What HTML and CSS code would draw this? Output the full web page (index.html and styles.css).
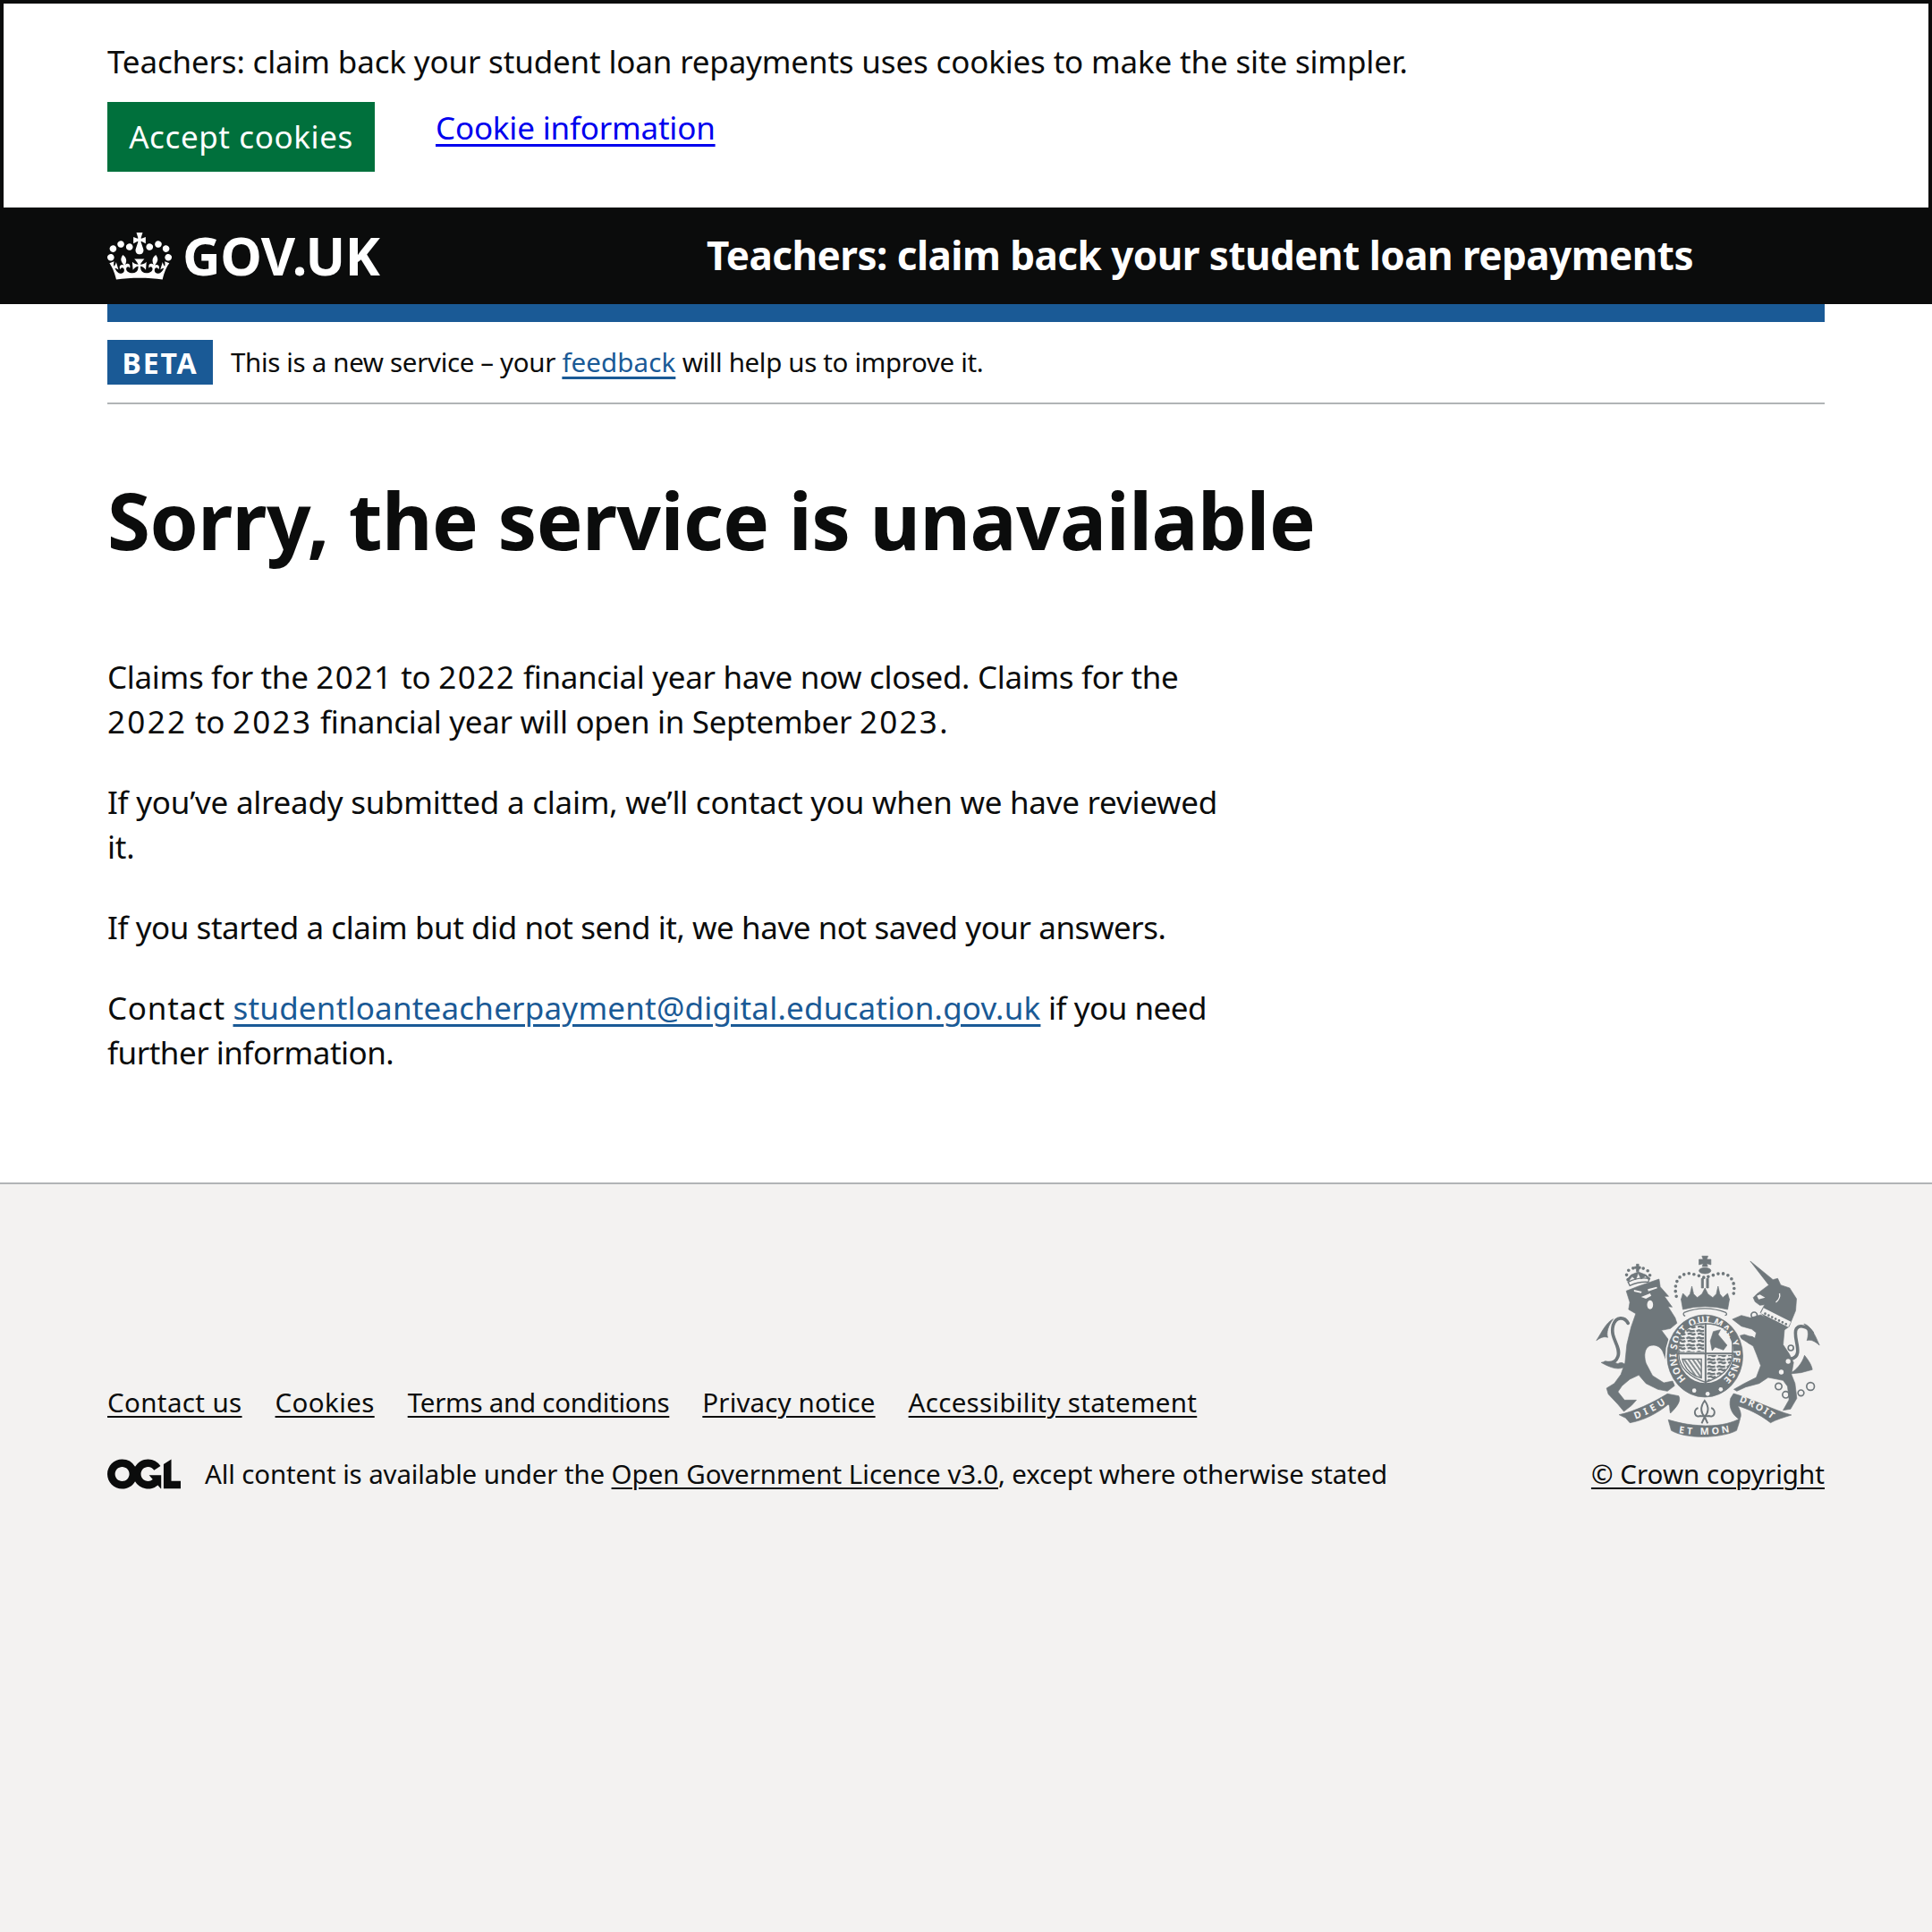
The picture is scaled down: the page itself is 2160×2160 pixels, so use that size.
FILE: index.html
```html
<!DOCTYPE html>
<html lang="en">
<head>
<meta charset="utf-8">
<title>Sorry, the service is unavailable</title>
<link rel="stylesheet" href="styles.css">
</head>
<body>
<section class="cookie">
  <p class="cookie-text">Teachers: claim back your student loan repayments uses cookies to make the site simpler.</p>
  <div class="cookie-actions">
    <button class="accept" type="button">Accept cookies</button>
    <a class="cookie-link" href="#">Cookie information</a>
  </div>
</section>

<header class="header">
  <a class="logo" href="#">
    <svg class="crown" viewBox="0 0 132 97" aria-hidden="true"><path fill="currentColor" fill-rule="evenodd" d="M25 30.2c3.5 1.5 7.7-.2 9.1-3.7 1.5-3.6-.2-7.8-3.9-9.2-3.6-1.4-7.6.3-9.1 3.9-1.4 3.5.3 7.5 3.9 9zM9 39.5c3.6 1.5 7.8-.2 9.2-3.7 1.5-3.6-.2-7.8-3.9-9.1-3.6-1.5-7.6.2-9.1 3.8-1.4 3.5.3 7.5 3.8 9zM4.4 57.2c3.5 1.5 7.7-.2 9.1-3.8 1.5-3.6-.2-7.7-3.9-9.1-3.5-1.5-7.6.3-9.1 3.8-1.4 3.5.3 7.6 3.9 9.1zm38.3-21.4c3.5 1.5 7.7-.2 9.1-3.8 1.5-3.6-.2-7.7-3.9-9.1-3.6-1.5-7.6.3-9.1 3.8-1.3 3.6.4 7.7 3.9 9.1zm64.4-5.6c-3.6 1.5-7.8-.2-9.1-3.7-1.5-3.6.2-7.8 3.8-9.2 3.6-1.4 7.7.3 9.2 3.9 1.3 3.5-.4 7.5-3.9 9zm15.9 9.3c-3.6 1.5-7.7-.2-9.1-3.7-1.5-3.6.2-7.8 3.7-9.1 3.6-1.5 7.7.2 9.2 3.8 1.5 3.5-.3 7.5-3.8 9zm4.7 17.7c-3.6 1.5-7.8-.2-9.2-3.8-1.5-3.6.2-7.7 3.9-9.1 3.6-1.5 7.7.3 9.2 3.8 1.3 3.5-.4 7.6-3.9 9.1zM89.3 35.8c-3.6 1.5-7.8-.2-9.2-3.8-1.4-3.6.2-7.7 3.9-9.1 3.6-1.5 7.7.3 9.2 3.8 1.4 3.6-.3 7.7-3.9 9.1zM69.7 17.7l8.9 4.7V9.3l-8.9 2.8c-.2-.3-.5-.6-.9-.9L72.4 0H59.6l3.5 11.2c-.3.3-.6.5-.9.9l-8.8-2.8v13.1l8.8-4.7c.3.3.6.7.9.9l-5 15.4v.1c-.2.8-.4 1.6-.4 2.4 0 4.1 3.1 7.5 7 8.1h.2c.3 0 .7.1 1 .1.4 0 .7 0 1-.1h.2c4-.6 7.1-4.1 7.1-8.1 0-.8-.1-1.7-.4-2.4V34l-5.1-15.4c.4-.2.7-.6 1-.9zM66 92.8c16.9 0 32.8 1.1 47.1 3.2 4-16.9 8.9-26.7 14-33.5l-9.6-3.4c1 4.9 1.1 7.2 0 10.2-1.5-1.4-3-4.3-4.2-8.7L108.6 76c2.8-2 5-3.2 7.5-3.3-4.4 9.4-10 11.9-13.6 11.2-4.3-.8-6.3-4.6-5.6-7.9 1-4.7 5.7-5.9 8-.5 4.3-8.7-3-11.4-7.6-8.8 7.1-7.2 7.9-13.5 2.1-21.1-8 6.1-8.1 12.3-4.5 20.8-4.7-5.4-12.1-2.5-9.5 6.2 3.4-5.2 7.9-2 7.2 3.1-.6 4.3-6.4 7.8-13.5 7.2-10.3-.9-10.9-8-11.2-13.8 2.5-.5 7.1 1.8 11 7.3L80.2 60c-4.1 4.4-8 5.3-12.3 5.4 1.4-4.4 8-11.6 8-11.6H55.5s6.4 7.2 7.9 11.6c-4.2-.1-8-1-12.3-5.4l1.4 16.4c3.9-5.5 8.5-7.7 10.9-7.3-.3 5.8-.9 12.8-11.1 13.8-7.2.6-12.9-2.9-13.5-7.2-.7-5 3.8-8.3 7.1-3.1 2.7-8.7-4.6-11.6-9.4-6.2 3.7-8.5 3.6-14.7-4.6-20.8-5.8 7.6-5 13.9 2.2 21.1-4.7-2.6-11.9.1-7.7 8.8 2.3-5.5 7.1-4.2 8.1.5.7 3.3-1.3 7.1-5.7 7.9-3.5.7-9-1.8-13.5-11.2 2.5.1 4.7 1.3 7.5 3.3l-4.7-15.4c-1.2 4.4-2.7 7.2-4.3 8.7-1.1-3-.9-5.3 0-10.2l-9.5 3.4c5 6.9 9.9 16.7 14 33.5 14.8-2.1 30.8-3.2 47.7-3.2z"/></svg>
    <span class="logo-text">GOV.UK</span>
  </a>
  <a class="service-name" href="#">Teachers: claim back your student loan repayments</a>
</header>

<div class="width">
  <div class="phase">
    <strong class="tag">BETA</strong>
    <span class="phase-text">This is a new service – your <a class="link phase-link" href="#">feedback</a> will help us to improve it.</span>
  </div>
  <main class="main">
    <h1 class="title">Sorry, the service is unavailable</h1>
    <p class="body body-dates">Claims for the <span class="num">2021</span> to <span class="num">2022</span> financial year have now closed. Claims for the <span class="num-wide">2022</span> to <span class="num-wide">2023</span> financial year will open in September <span class="num-wide">2023</span>.</p>
    <p class="body">If you’ve already submitted a claim, we’ll contact you when we have reviewed it.</p>
    <p class="body body-tight">If you started a claim but did not send it, we have not saved your answers.</p>
    <p class="body body-contact"><span class="contact-word">Contact</span> <a class="link email" href="#">studentloanteacherpayment@digital.education.gov.uk</a> if you need further information.</p>
  </main>
</div>

<footer class="footer">
  <div class="footer-inner">
    <div class="footer-left">
      <ul class="footer-nav">
        <li><a href="#">Contact us</a></li>
        <li><a href="#">Cookies</a></li>
        <li><a href="#">Terms and conditions</a></li>
        <li><a href="#">Privacy notice</a></li>
        <li><a href="#">Accessibility statement</a></li>
      </ul>
      <div class="footer-meta">
        <svg class="ogl" viewBox="0 0 483.2 195.7" aria-hidden="true"><path fill="currentColor" d="M421.5 142.8V.1l-50.7 32.3v161.1h112.4v-50.7zm-122.3-9.6A47.12 47.12 0 0 1 221 97.8c0-26 21.1-47.1 47.1-47.1 16.7 0 31.4 8.7 39.7 21.8l42.7-27.2A97.63 97.63 0 0 0 268.1 0c-36.5 0-68.3 20.1-85.1 49.7A98 98 0 0 0 97.8 0C43.9 0 0 43.9 0 97.8s43.9 97.8 97.8 97.8c36.5 0 68.3-20.1 85.1-49.7a97.76 97.76 0 0 0 149.6 25.4l19.4 22.2h3v-87.8h-80l24.3 27.5zM97.8 145c-26 0-47.1-21.1-47.1-47.1s21.1-47.1 47.1-47.1 47.2 21 47.2 47S123.8 145 97.8 145"/></svg>
        <span class="licence">All content is available under the <a href="#">Open Government Licence v3.0</a>, except where otherwise stated</span>
      </div>
    </div>
    <div class="footer-right">
      <svg class="crest" viewBox="60 30 770 630" aria-hidden="true">
        <defs>
          <path id="ringpath" d="M375 455 A96 107 0 1 1 486 467"/>
          <path id="dieu" d="M205 590 Q262 570 318 530"/>
          <path id="etmon" d="M350 636 Q440 650 526 632"/>
          <path id="droit" d="M552 532 Q610 550 668 594"/>
          <clipPath id="shieldclip"><path d="M350 330 C350 292 392 270 440 270 C488 270 530 292 530 330 L530 372 C530 418 490 450 440 466 C390 450 350 418 350 372 Z"/></clipPath>
          <pattern id="lions" width="34" height="24" patternUnits="userSpaceOnUse"><path class="crest-pat" d="M2 8 q6 -7 13 -2 q8 2 15 -1 M6 17 q8 -5 14 0 q6 3 12 -2"/></pattern>
          <pattern id="harp" width="12" height="12" patternUnits="userSpaceOnUse" patternTransform="rotate(55)"><path class="crest-thin" d="M0 6 H12"/></pattern>
        </defs>
        <!-- lion tail -->
        <path class="crest-line" d="M180 268 C168 245 140 245 130 275 C118 320 158 345 146 380 C138 402 120 404 104 400"/>
        <path class="crest-fill" d="M130 254 C106 266 92 298 74 326 C90 314 102 312 112 316 C106 300 114 275 130 254 Z"/>
        <path class="crest-fill" d="M90 400 C110 394 128 396 146 404 C158 396 168 402 172 412 C150 428 122 418 90 400 Z"/>
        <!-- lion -->
        <path class="crest-fill" d="M174 160 L215 144 L284 120 L288 146 L316 178 L302 178 L328 214 L314 212 L338 250 L344 268 L322 286 L292 292 L322 332 L344 374 L336 394 L310 398 L296 362 C288 346 270 338 252 344 C236 352 232 376 240 402 L262 444 L300 468 L330 462 L336 478 L312 496 L280 490 L240 470 L216 442 L186 456 L160 478 L146 498 L168 526 L208 526 L192 544 L166 564 L146 540 L114 506 L108 486 L134 470 L156 440 L170 400 L176 340 L190 282 L206 236 L182 222 L186 198 Z"/>
        <path class="crest-bg" d="M200 156 L226 162 L224 167 L200 162 Z M246 154 L276 146 L278 151 L248 161 Z M224 180 L254 168 L258 176 L240 186 Z"/>
        <ellipse class="crest-bg" cx="254" cy="206" rx="10" ry="15"/>
        <!-- lion crown -->
        <path class="crest-fill" d="M182 126 L194 112 L206 122 L214 100 L224 120 L238 110 L250 124 L254 118 L240 106 L214 96 L190 106 L176 122 Z"/>
        <path class="crest-line-thin" d="M180 130 Q215 112 252 118 L248 130 Q215 128 186 142 Z"/>
        <path class="crest-dots" d="M180 122 C166 100 184 78 212 84 C240 78 262 100 250 120"/>
        <path class="crest-fill" d="M202 78 h6 v-8 h8 v8 h6 v7 h-6 v10 h-8 v-10 h-6 Z"/>
        <!-- central crown -->
        <path class="crest-fill" d="M428 43 H448 L444 54 H458 V72 L444 68 L447 78 H429 L432 68 L418 72 V54 L432 54 Z"/>
        <ellipse class="crest-fill" cx="438" cy="92" rx="20" ry="10"/>
        <path class="crest-fill" d="M426 118 H433 V150 H426 Z M443 118 H450 V150 H443 Z"/>
        <path class="crest-dots" d="M342 178 C328 120 365 92 400 104 C415 108 428 112 438 116 C448 112 462 108 476 104 C512 92 548 120 532 178"/>
        <path class="crest-fill" d="M358 188 L364 168 L378 182 L388 170 L394 144 L400 170 L412 182 L428 170 L438 150 L448 170 L464 182 L476 170 L482 144 L488 170 L498 182 L514 168 L520 188 Z"/>
        <path class="crest-fill" d="M358 188 Q438 178 520 188 L514 222 Q438 202 364 222 Z"/>
        <path class="crest-line-thin" d="M368 232 Q438 205 508 232 Q515 240 505 242 M368 232 Q362 240 372 244"/>
        <!-- unicorn tail -->
        <path class="crest-line" d="M726 388 C775 378 728 312 745 286 C755 272 782 278 798 300"/>
        <path class="crest-fill" d="M770 270 C795 278 808 310 822 342 C806 328 794 322 780 326 C786 308 786 286 770 270 Z"/>
        <path class="crest-fill" d="M772 376 C788 396 796 410 798 424 L760 434 L722 438 C746 424 764 402 772 376 Z"/>
        <!-- unicorn -->
        <path class="crest-fill" d="M590 60 L666 122 L682 118 L692 140 L722 150 L745 186 L742 226 L728 260 L720 280 L705 290 L640 250 L624 232 L638 206 L622 208 L606 196 L600 182 L612 170 L652 140 Z"/>
        <path class="crest-fill" d="M625 240 L705 285 L700 340 L720 370 L735 400 L728 440 L740 470 L746 520 L725 556 L700 560 L720 525 L715 480 L700 460 L650 450 L620 470 L575 482 L545 496 L535 490 L570 470 L610 450 L625 410 L612 375 L600 345 L548 312 L570 306 L606 318 L610 300 L595 288 L560 278 L530 255 L560 242 L590 250 Z"/>
        <path class="crest-collar" d="M630 226 L722 272"/>
        <path class="crest-dots-small" d="M640 236 L716 274"/>
        <path class="crest-bg" d="M612 176 L622 172 L640 182 L618 188 Z"/>
        <path class="crest-line-bg" d="M688 168 Q692 185 676 198"/>
        <circle class="crest-bg" cx="717" cy="396" r="8"/>
        <circle class="crest-bg" cx="694" cy="432" r="8"/>
        <circle class="crest-ring" cx="603" cy="241" r="10"/>
        <circle class="crest-ring" cx="592" cy="325" r="11"/>
        <circle class="crest-ring" cx="726" cy="351" r="9"/>
        <circle class="crest-ring" cx="685" cy="480" r="11"/>
        <circle class="crest-ring" cx="709" cy="508" r="11"/>
        <circle class="crest-ring" cx="760" cy="502" r="10"/>
        <circle class="crest-ring" cx="792" cy="480" r="13"/>
        <!-- shield ring -->
        <ellipse class="crest-bg" cx="438" cy="378" rx="133" ry="143"/>
        <ellipse class="crest-fill" cx="438" cy="378" rx="127" ry="138"/>
        <ellipse class="crest-bg" cx="440" cy="366" rx="93" ry="103"/>
        <text class="crest-text ring-text"><textPath href="#ringpath" textLength="500">HONI SOIT QUI MAL Y PENSE</textPath></text>
        <g clip-path="url(#shieldclip)">
          <rect class="q-lions" x="350" y="270" width="85" height="95"/>
          <rect class="q-lions" x="445" y="375" width="85" height="95"/>
          <path class="crest-harp" d="M362 388 H426 V452 Q375 440 362 388 Z"/>
          <path class="crest-line-thin" d="M362 388 H426 V452 Q375 440 362 388 Z"/>
          <path class="crest-fill" d="M456 328 L466 296 L490 290 L482 306 L512 342 L500 358 L472 348 L462 360 Z"/>
        </g>
        <path class="crest-cross" d="M440 268 V480 M346 370 H534"/>
        <path class="crest-line-thin" d="M350 330 C350 292 392 270 440 270 C488 270 530 292 530 330 L530 372 C530 418 490 450 440 466 C390 450 350 418 350 372 Z"/>
        <circle class="crest-bg" cx="402" cy="494" r="7"/><circle class="crest-bg" cx="447" cy="505" r="7"/><circle class="crest-bg" cx="491" cy="490" r="7"/>
        <!-- ribbons -->
        <path class="crest-fill" d="M150 575 C200 565 262 535 312 505 L350 512 C360 530 340 552 322 570 C318 555 322 545 315 540 C280 570 230 595 186 602 L172 586 Z"/>
        <path class="crest-fill" d="M524 520 L534 504 C590 520 670 560 728 576 C700 585 680 590 658 602 C620 572 580 555 548 545 C560 565 562 585 552 590 C530 575 516 550 524 520 Z"/>
        <path class="crest-fill" d="M315 592 C345 600 375 610 440 612 C500 612 530 600 556 588 C552 605 548 615 544 628 C500 652 380 660 325 628 C322 615 318 605 315 592 Z"/>
        <text class="crest-text ribbon-text"><textPath href="#dieu" textLength="115">DIEU</textPath></text>
        <text class="crest-text ribbon-text"><textPath href="#etmon" textLength="172">ET MON</textPath></text>
        <text class="crest-text ribbon-text"><textPath href="#droit" textLength="125">DROIT</textPath></text>
        <!-- fleur -->
        <path class="crest-fleur" d="M437 528 C420 550 425 570 437 582 C449 570 454 550 437 528 Z M425 578 C405 590 395 560 415 552 M449 578 C469 590 479 560 459 552 M418 580 H456 M437 582 L427 604 M437 582 L447 604"/>
      </svg>
      <a class="copyright" href="#">© Crown copyright</a>
    </div>
  </div>
</footer>
</body>
</html>
```
FILE: styles.css
```css
* { box-sizing: border-box; }
html { background: #f3f2f1; }
body {
  margin: 0;
  min-height: 2160px;
  display: flex;
  flex-direction: column;
  background: #fff;
  color: #0b0c0c;
  font-family: "Noto Sans", sans-serif;
}
a { color: inherit; }

.cookie {
  border: 4px solid #0b0c0c;
  border-bottom: 0;
  padding: 40px 116px 40px;
  background: #fff;
}
.cookie-text {
  margin: 0 0 20px;
  font-size: 35px;
  line-height: 50px;
  letter-spacing: -0.17px;
}
.cookie-actions { display: flex; align-items: flex-start; gap: 68px; }
.accept {
  width: 299px;
  height: 78px;
  padding: 0;
  border: 0;
  background: #00703c;
  color: #fff;
  font: 35px/50px "Noto Sans", sans-serif;
  letter-spacing: 0.6px;
}
.cookie-link {
  margin-top: 4px;
  color: #0000ee;
  font-size: 35px;
  line-height: 50px;
  letter-spacing: -0.2px;
  text-decoration-thickness: 3px;
  text-underline-offset: 5px;
}

.header {
  height: 108px;
  padding: 0 120px 2px;
  display: flex;
  align-items: center;
  background: #0b0c0c;
  color: #fff;
}
.header a { color: #fff; text-decoration: none; }
.logo { width: 670px; display: flex; align-items: center; gap: 12px; }
.crown { width: 72px; height: 53px; margin-top: 2px; }
.logo-text { font-size: 59px; line-height: 70px; font-weight: 700; letter-spacing: -0.5px; }
.service-name { font-size: 44px; line-height: 60px; font-weight: 700; letter-spacing: -0.53px; }

.width { margin: 0 120px; }
.phase {
  border-top: 20px solid #1a5a96;
  border-bottom: 2px solid #b1b4b6;
  padding: 20px 0;
  display: flex;
  align-items: center;
  gap: 20px;
}
.tag {
  width: 118px;
  height: 50px;
  display: flex;
  align-items: center;
  justify-content: center;
  background: #1a5a96;
  color: #fff;
  font-size: 32px;
  font-weight: 700;
  letter-spacing: 1.8px;
}
.phase-text { font-size: 29.5px; line-height: 40px; letter-spacing: -0.34px; }
.link {
  color: #1a5a96;
  text-decoration-thickness: 3px;
  text-underline-offset: 5px;
}
.phase-link { letter-spacing: 0.1px; }

.main { padding: 79px 0 120px; }
.title {
  margin: 0 0 101px;
  font-size: 87px;
  line-height: 100px;
  font-weight: 700;
  letter-spacing: -0.55px;
}
.body {
  width: 1250px;
  margin: 0 0 40px;
  font-size: 35px;
  line-height: 50px;
  letter-spacing: -0.25px;
}
.body:last-child { margin-bottom: 0; }
.body-dates { letter-spacing: -0.33px; }
.num { letter-spacing: 1.5px; }
.num-wide { letter-spacing: 2.3px; }
.body-tight { letter-spacing: -0.45px; }
.body-contact { letter-spacing: -0.5px; }
.contact-word { letter-spacing: 0.75px; }
.email { letter-spacing: 0.2px; }

.footer {
  flex: 1;
  border-top: 2px solid #b1b4b6;
  background: #f3f2f1;
  padding: 76px 120px 0;
  font-size: 29.5px;
  line-height: 40px;
}
.footer a { text-decoration-thickness: 2px; text-underline-offset: 4px; }
.footer-inner { display: flex; justify-content: space-between; align-items: flex-end; }
.footer-nav {
  margin: 0 0 40px;
  padding: 0;
  list-style: none;
  display: flex;
  gap: 37px;
  letter-spacing: 0.38px;
}
.footer-nav li:nth-child(3) { letter-spacing: -0.25px; }
.footer-nav li:nth-child(4) { letter-spacing: 0.15px; }
.footer-nav li:nth-child(5) { letter-spacing: 0.3px; }
.footer-meta { display: flex; align-items: center; gap: 27px; }
.ogl { width: 82px; height: 34px; }
.licence { letter-spacing: -0.14px; }
.licence a { letter-spacing: 0; }
.footer-right { display: flex; flex-direction: column; align-items: flex-end; gap: 18px; }
.crest { width: 257px; height: 210px; margin-right: 3px; }
.copyright { letter-spacing: 0.05px; }

.crest-fill { fill: #6f777b; stroke: #6f777b; stroke-width: 2; stroke-linejoin: round; }
.crest-bg { fill: #f3f2f1; }
.crest-line { fill: none; stroke: #6f777b; stroke-width: 11; stroke-linecap: round; }
.crest-line-thin { fill: none; stroke: #6f777b; stroke-width: 4; }
.crest-line-bg { fill: none; stroke: #f3f2f1; stroke-width: 4; }
.crest-cross { fill: none; stroke: #6f777b; stroke-width: 6; }
.crest-fleur { fill: none; stroke: #6f777b; stroke-width: 6; }
.crest-thin { fill: none; stroke: #6f777b; stroke-width: 5; }
.crest-pat { fill: none; stroke: #6f777b; stroke-width: 7; }
.crest-dots { fill: none; stroke: #6f777b; stroke-width: 11; stroke-linecap: round; stroke-dasharray: 0 17; }
.crest-dots-small { fill: none; stroke: #6f777b; stroke-width: 8; stroke-linecap: round; stroke-dasharray: 0 13; }
.crest-collar { fill: none; stroke: #f3f2f1; stroke-width: 20; }
.crest-ring { fill: none; stroke: #6f777b; stroke-width: 5; }
.crest-text { fill: #f3f2f1; font-family: "Noto Sans", sans-serif; font-weight: 700; }
.ring-text { font-size: 32px; }
.ribbon-text { font-size: 32px; }
.q-lions { fill: url(#lions); }
.crest-harp { fill: url(#harp); }
```
